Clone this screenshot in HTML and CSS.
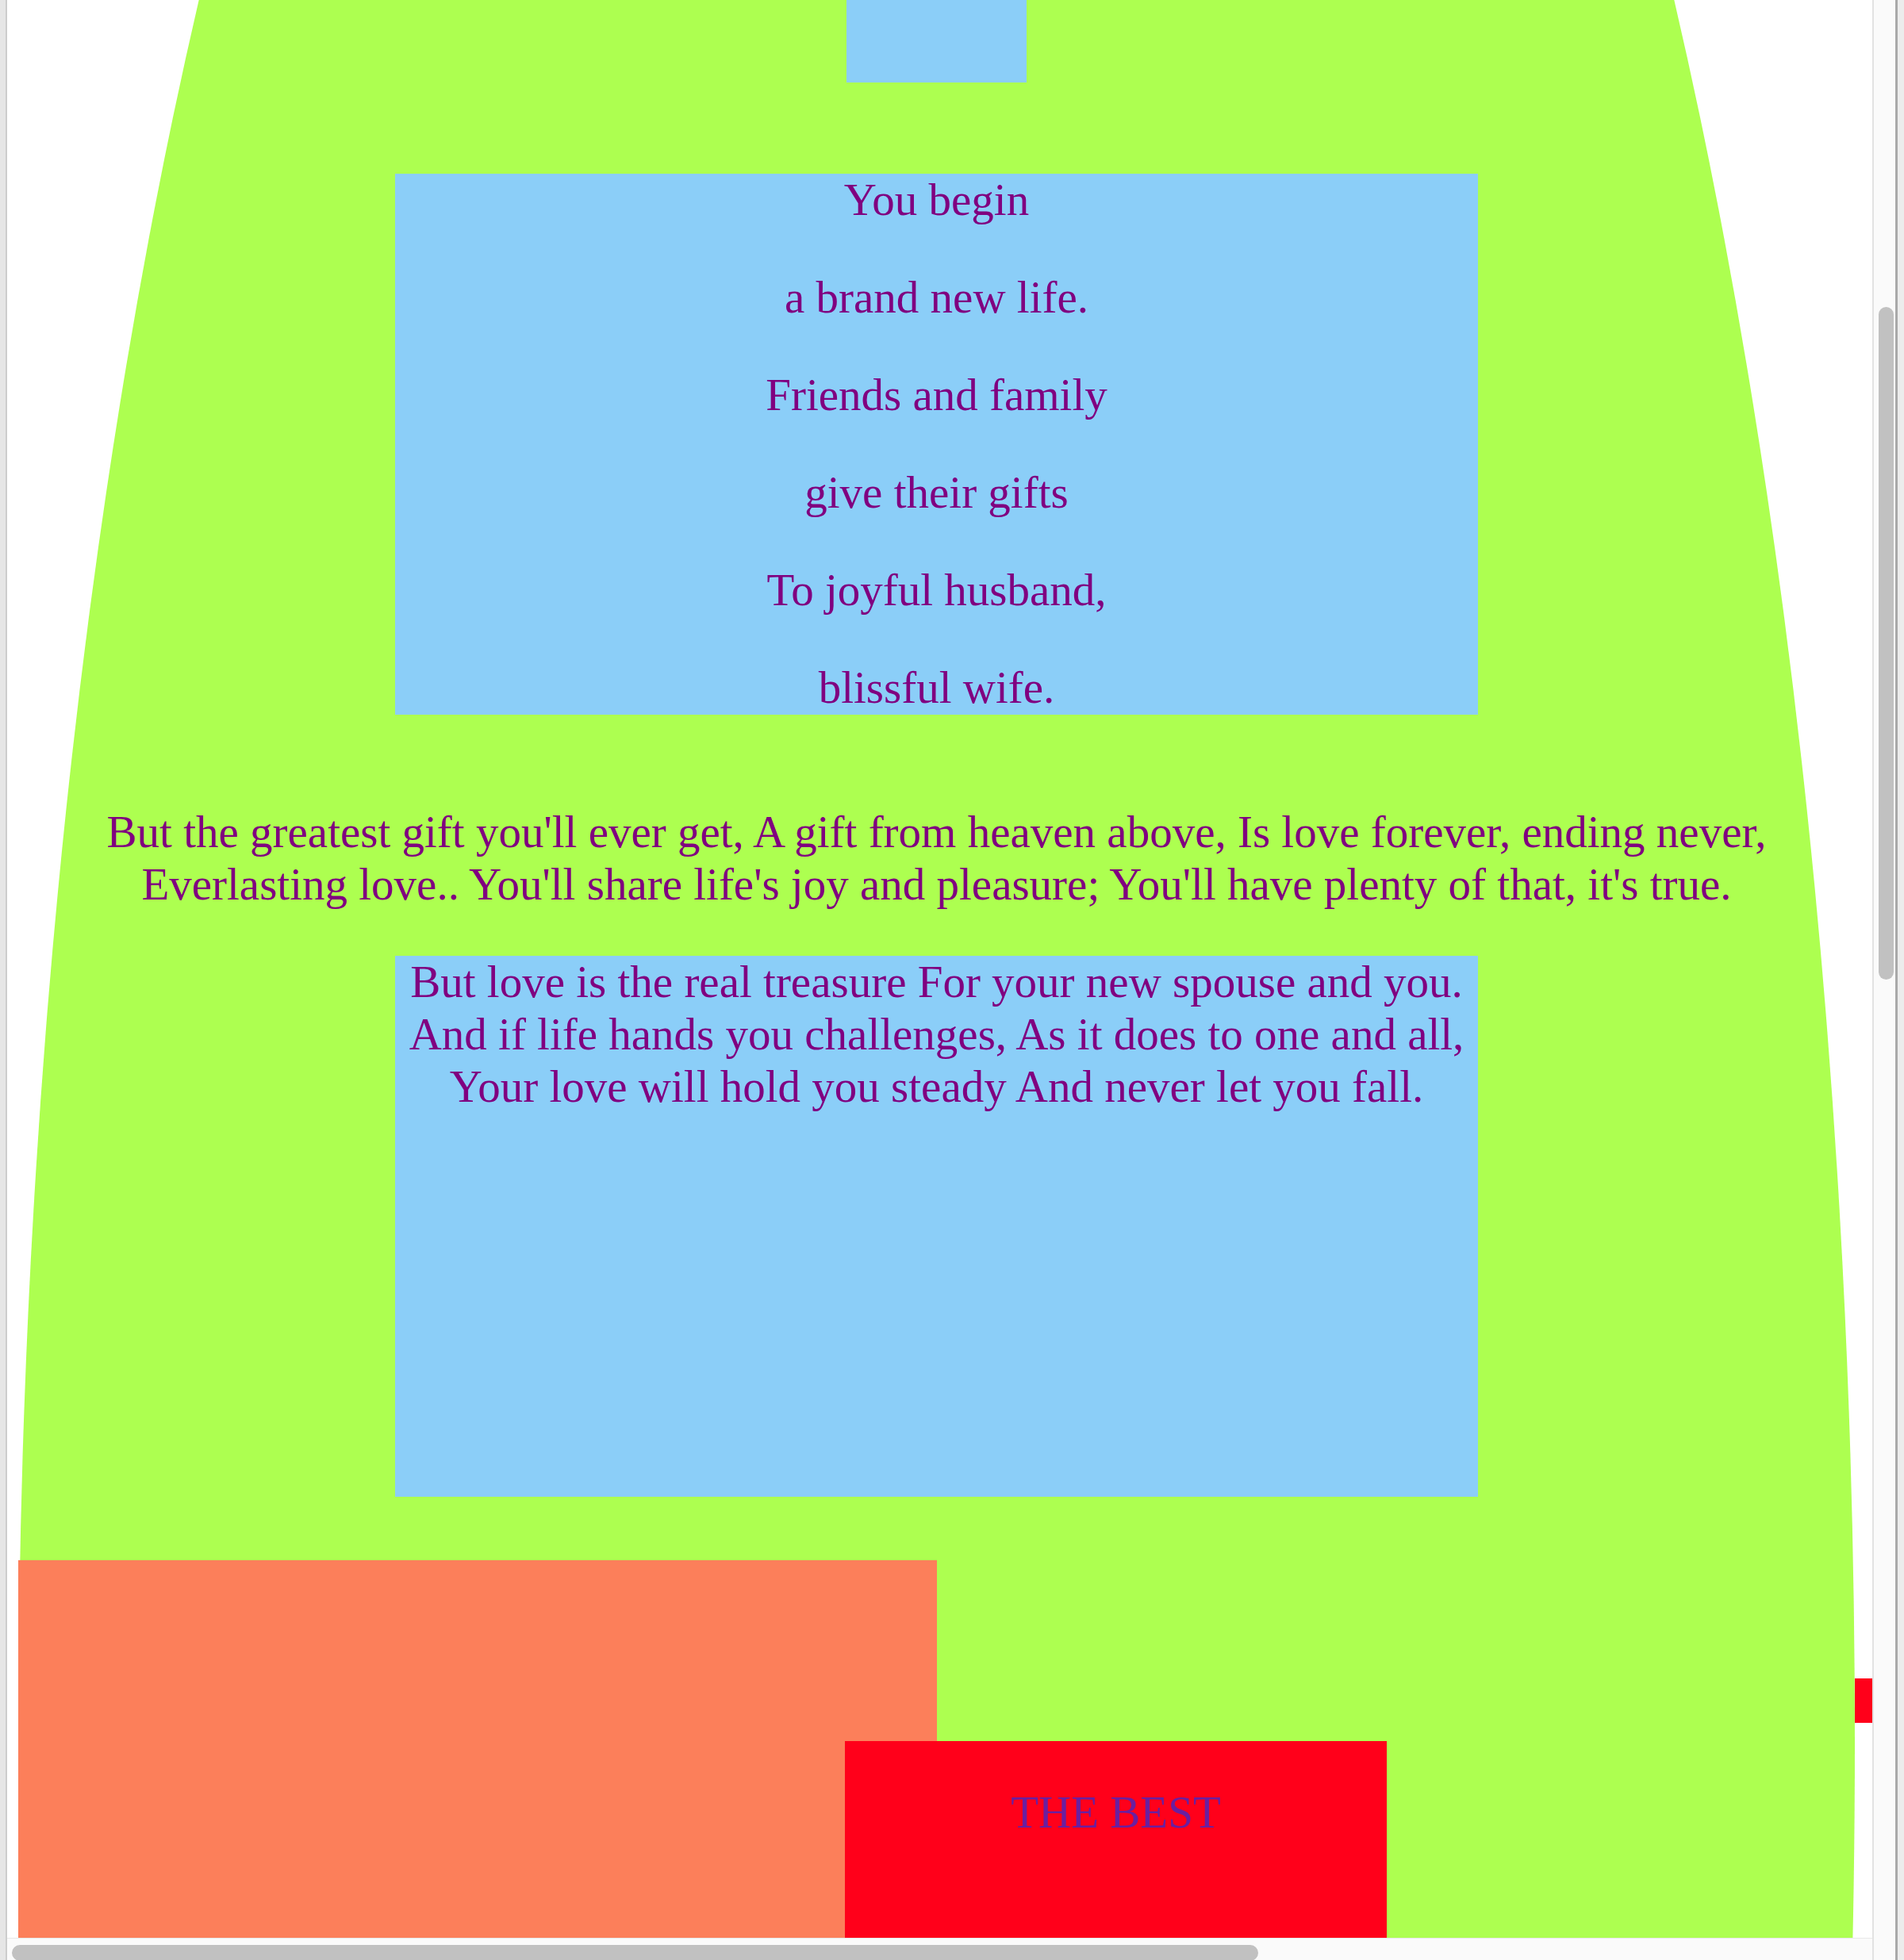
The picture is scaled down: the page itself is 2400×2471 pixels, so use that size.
FILE: index.html
```html
<!DOCTYPE html>
<html lang="en">
<head>
    <meta charset="UTF-8">
    <meta name="viewport" content="width=device-width, initial-scale=1.0">
    <title>Wedding Poem</title>
    <link rel="stylesheet" href="styles.css">
</head>
<body>

    <div class="window">
        <div class="frame-left"></div>

        <div class="main">
            <div class="viewport">
                <div class="page">
                    <div class="dome">
                        <div class="top-box"></div>

                        <div class="poem">
                            <p>You begin</p>
                            <p>a brand new life.</p>
                            <p>Friends and family</p>
                            <p>give their gifts</p>
                            <p>To joyful husband,</p>
                            <p>blissful wife.</p>
                        </div>

                        <p class="verse">But the greatest gift you'll ever get, A gift from heaven above, Is love forever, ending never, Everlasting love.. You'll share life's joy and pleasure; You'll have plenty of that, it's true.</p>

                        <div class="poem poem-flow">
                            But love is the real treasure For your new spouse and you. And if life hands you challenges, As it does to one and all, Your love will hold you steady And never let you fall.
                        </div>

                        <div class="bottom-row">
                            <div class="coral"></div>
                            <div class="best">
                                <p>THE BEST</p>
                            </div>
                        </div>
                    </div>

                    <div class="edge-tab"></div>
                </div>
            </div>

            <div class="hscroll">
                <div class="hthumb"></div>
            </div>
        </div>

        <div class="vscroll">
            <div class="vthumb"></div>
        </div>
        <div class="frame-right"></div>
    </div>

</body>
</html>
```

FILE: styles.css
```css
body {
    margin: 0;
    padding: 0;
    font-family: 'Liberation Serif', 'Times New Roman', serif;
    font-size: 57px;
    line-height: 66px;
    color: #800080;
    background-color: #fff;
}

.window {
    display: flex;
    width: 2400px;
    height: 2471px;
    overflow: hidden;
}

.frame-left {
    width: 7px;
    background-color: #e6e6e6;
    border-right: 2px solid #cdcdcd;
}

.main {
    flex: 1;
    display: flex;
    flex-direction: column;
    min-width: 0;
}

.viewport {
    height: 2443px;
    flex-shrink: 0;
    overflow: hidden;
    background-color: #fff;
}

.page {
    display: flex;
    align-items: flex-start;
    margin-top: -1491px;
    padding-left: 14px;
}

.dome {
    flex-shrink: 0;
    width: 2315px;
    height: 7374px;
    padding-top: 1491px;
    box-sizing: border-box;
    border-radius: 50%;
    background-color: #adff50;
}

.top-box {
    width: 227px;
    height: 104px;
    margin: 0 auto 115px;
    background-color: #8bcef8;
}

.poem {
    display: flex;
    flex-direction: column;
    gap: 57px;
    width: 1365px;
    height: 682px;
    margin: 0 auto 115px;
    text-align: center;
    background-color: #8bcef8;
}

.poem p {
    margin: 0;
}

.poem-flow {
    display: block;
    margin-bottom: 0;
}

.verse {
    margin: 0 0 57px;
    text-align: center;
}

.bottom-row {
    display: flex;
    align-items: flex-start;
    margin-top: 80px;
}

.coral {
    flex-shrink: 0;
    width: 1158px;
    height: 700px;
    background-color: #fc7f5a;
}

.best {
    flex-shrink: 0;
    width: 683px;
    height: 500px;
    margin-left: -116px;
    margin-top: 228px;
    padding-top: 57px;
    box-sizing: border-box;
    text-align: center;
    color: #6a1fa0;
    background-color: #ff001a;
}

.best p {
    margin: 0;
}

.edge-tab {
    flex-shrink: 0;
    width: 120px;
    height: 56px;
    margin-top: 3607px;
    background-color: #ff001a;
}

.hscroll {
    flex: 1;
    background-color: #fafafa;
    border-top: 1px solid #e8e8e8;
    padding-top: 8px;
}

.hthumb {
    width: 1571px;
    height: 20px;
    margin-left: 6px;
    border-radius: 10px;
    background-color: #c1c1c1;
}

.vscroll {
    width: 21px;
    padding-left: 6px;
    padding-top: 387px;
    background-color: #fafafa;
    border-left: 2px solid #e2e2e2;
    border-right: 3px solid #a9a9a9;
}

.vthumb {
    width: 19px;
    height: 848px;
    border-radius: 10px;
    background-color: #c1c1c1;
}

.frame-right {
    width: 8px;
    background-color: #ececec;
}
```
